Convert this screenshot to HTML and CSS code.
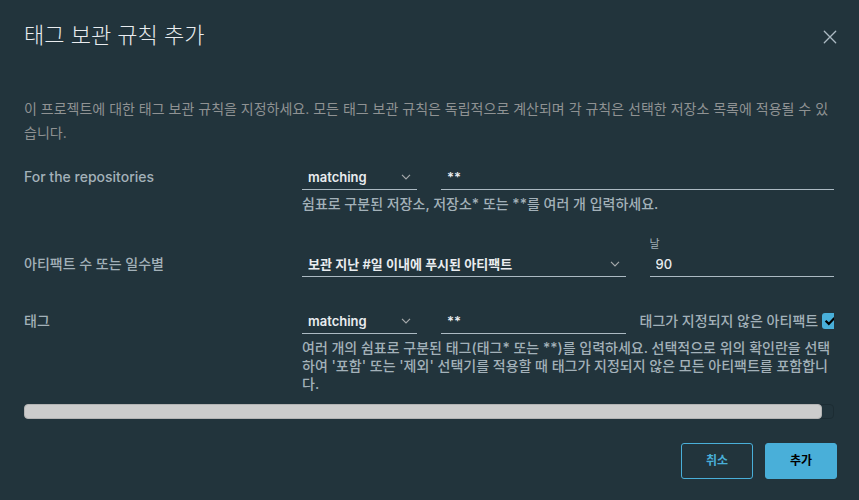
FILE: index.html
```html
<!DOCTYPE html>
<html lang="ko">
<head>
<meta charset="utf-8">
<meta name="viewport" content="width=device-width, initial-scale=1">
<title>태그 보관 규칙 추가</title>
<link rel="stylesheet" href="styles.css">
</head>
<body>
<main class="modal">
  <header class="modal-header">
    <h1 class="modal-title">태그 보관 규칙 추가</h1>
    <button class="close" type="button" aria-label="닫기">
      <svg viewBox="0 0 14 14" width="14" height="14"><path d="M1.3 1.3 12.7 12.7M12.7 1.3 1.3 12.7"/></svg>
    </button>
  </header>
  <form class="form">
    <div class="modal-body">
      <p class="description">이 프로젝트에 대한 태그 보관 규칙을 지정하세요. 모든 태그 보관 규칙은 독립적으로 계산되며 각 규칙은 선택한 저장소 목록에 적용될 수 있습니다.</p>

      <div class="row">
        <label class="label" for="repo-pattern">For the repositories</label>
        <div class="select-box short">
          <select class="control" aria-label="repositories"><option>matching</option><option>excluding</option></select>
          <svg class="caret" viewBox="0 0 10 6" width="10" height="6"><path d="M1 .8 5 4.8 9 .8"/></svg>
        </div>
        <input class="control wide" id="repo-pattern" type="text" value="**">
        <p class="hint">쉼표로 구분된 저장소, 저장소* 또는 **를 여러 개 입력하세요.</p>
      </div>

      <div class="row template-row">
        <label class="label" for="template">아티팩트 수 또는 일수별</label>
        <div class="select-box long">
          <select class="control" id="template"><option>보관 지난 #일 이내에 푸시된 아티팩트</option></select>
          <svg class="caret" viewBox="0 0 10 6" width="10" height="6"><path d="M1 .8 5 4.8 9 .8"/></svg>
        </div>
        <div class="unit">
          <label class="unit-label" for="days">날</label>
          <input class="control number" id="days" type="text" inputmode="numeric" value="90">
        </div>
      </div>

      <div class="row">
        <label class="label" for="tag-pattern">태그</label>
        <div class="select-box short">
          <select class="control" aria-label="태그"><option>matching</option><option>excluding</option></select>
          <svg class="caret" viewBox="0 0 10 6" width="10" height="6"><path d="M1 .8 5 4.8 9 .8"/></svg>
        </div>
        <input class="control medium" id="tag-pattern" type="text" value="**">
        <div class="untagged">
          <label for="untagged">태그가 지정되지 않은 아티팩트</label>
          <span class="check">
            <input class="check-input" id="untagged" type="checkbox" checked>
            <svg class="check-mark" viewBox="0 0 16 16" width="16" height="16"><path d="M3.6 7.7 6.8 10.9 12.4 5"/></svg>
          </span>
        </div>
        <p class="hint">여러 개의 쉼표로 구분된 태그(태그* 또는 **)를 입력하세요. 선택적으로 위의 확인란을 선택하여 '포함' 또는 '제외' 선택기를 적용할 때 태그가 지정되지 않은 모든 아티팩트를 포함합니다.</p>
      </div>
    </div>
    <div class="scroll-track"><div class="scroll-thumb"></div></div>
    <footer class="modal-footer">
      <button class="button" type="button">취소</button>
      <button class="button primary" type="submit">추가</button>
    </footer>
  </form>
</main>
</body>
</html>
```
FILE: styles.css
```css
* {
  box-sizing: border-box;
}

body {
  margin: 0;
  background: #22343c;
  color: #a3b1b9;
  font-family: Inter, "Noto Sans CJK KR", sans-serif;
  font-size: 14px;
  font-weight: 500;
  line-height: 24px;
}

h1,
p {
  margin: 0;
}

.modal {
  padding: 20px 22px 20px 24px;
}

.modal-header {
  display: flex;
  justify-content: space-between;
  align-items: flex-end;
}

.modal-title {
  color: #e9ecef;
  font-size: 22px;
  font-weight: 300;
  line-height: 30px;
}

.close {
  display: flex;
  padding: 6px 0;
  border: 0;
  background: none;
}

.close path {
  fill: none;
  stroke: #acbac3;
  stroke-width: 1.3;
  stroke-linecap: round;
}

.modal-body {
  margin: 47px 3px 0 0;
  overflow: hidden;
}

.description {
  margin-bottom: 20px;
  color: #8f9293;
  font-weight: 400;
}

.row {
  display: grid;
  grid-template-columns: repeat(12, minmax(0, 1fr));
  column-gap: 24px;
  margin-bottom: 24px;
}

.row:last-child {
  margin-bottom: 11px;
}

.label {
  grid-column: span 4;
  height: 25px;
}

.short {
  grid-column: span 2;
}

.medium {
  grid-column: span 3;
}

.wide {
  grid-column: span 6;
}

.long {
  grid-column: span 5;
}

.unit {
  grid-column: span 3;
}

.control {
  display: block;
  width: 100%;
  height: 25px;
  margin: 0;
  padding: 0 6px;
  border: 0;
  border-bottom: 1px solid #acbac3;
  border-radius: 0;
  outline: 0;
  background: none;
  color: #e9ecef;
  font: 600 13px/24px Inter, "Noto Sans CJK KR", sans-serif;
  appearance: none;
}

.select-box {
  position: relative;
}

.medium,
.wide {
  width: auto;
}

.caret {
  position: absolute;
  top: 9px;
  right: 6px;
  pointer-events: none;
}

.caret path {
  fill: none;
  stroke: #a5a9ab;
  stroke-width: 1.2;
}

.hint {
  grid-column: 5 / -1;
  padding-top: 5px;
  line-height: 18px;
}

.template-row {
  align-items: end;
  margin-bottom: 32px;
}

.unit-label {
  display: block;
  font-size: 11px;
  font-weight: 400;
  line-height: 15px;
}

.number {
  font-weight: 500;
}

.untagged {
  display: flex;
  grid-column: span 3;
  gap: 4px;
  margin-left: -10px;
  white-space: nowrap;
}

.check {
  position: relative;
  flex: none;
  width: 16px;
  height: 16px;
  margin-top: 4px;
}

.check-input {
  display: block;
  width: 16px;
  height: 16px;
  margin: 0;
  border-radius: 3px;
  background: #49afd9;
  appearance: none;
}

.check-mark {
  position: absolute;
  inset: 0;
  pointer-events: none;
}

.check-mark path {
  fill: none;
  stroke: #000;
  stroke-width: 2.2;
}

.scroll-track {
  height: 15px;
  margin-right: 3px;
  border: 1px solid #1c2c33;
  border-radius: 4px;
}

.scroll-thumb {
  height: 15px;
  margin: -1px 11px -1px -1px;
  border: 1px solid #b3b3b3;
  border-radius: 4px;
  background: #ccc;
}

.modal-footer {
  display: flex;
  justify-content: flex-end;
  gap: 12px;
  margin-top: 24px;
}

.button {
  min-width: 72px;
  height: 36px;
  padding: 0 12px;
  border: 1px solid #49afd9;
  border-radius: 3px;
  background: none;
  color: #49afd9;
  font: 600 12px/24px Inter, "Noto Sans CJK KR", sans-serif;
}

.primary {
  background: #49afd9;
  color: #000;
}
```
